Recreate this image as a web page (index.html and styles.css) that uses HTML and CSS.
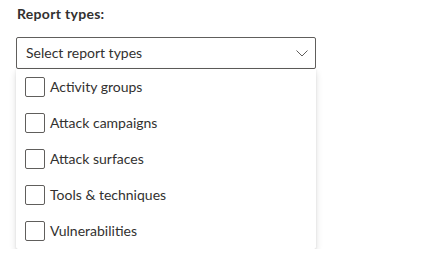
FILE: index.html
```html
<!DOCTYPE html>
<html>
  <head>
  <title>Report types</title>
  <link rel="stylesheet" href="styles.css">
</head>
  <body>
    <div class="field">
      <label class="field-label">Report types:</label>
      <div class="dropdown">
        <span class="dropdown-title">Select report types</span>
        <svg class="caret" width="12" height="7" viewBox="0 0 12 7"><polyline points="0.5,0.5 6,6 11.5,0.5" fill="none" stroke="#605e5c" stroke-width="1"/></svg>
      </div>
      <ul class="options">
        <li><span class="box"></span>Activity groups</li>
        <li><span class="box"></span>Attack campaigns</li>
        <li><span class="box"></span>Attack surfaces</li>
        <li><span class="box"></span>Tools &amp; techniques</li>
        <li><span class="box"></span>Vulnerabilities</li>
      </ul>
    </div>
  </body>
</html>
```

FILE: styles.css
```css
body{
  margin:0;
  background:#fff;
  font-family:Lato, "Noto Sans", sans-serif;
  font-size:14px;
  color:#323130;
}

.field{
  width:300px;
  padding-left:16px;
}

.field-label{
  display:block;
  font-weight:700;
  letter-spacing:0.3px;
  line-height:20px;
  padding:4px 0 13px 1px;
}

.dropdown{
  box-sizing:border-box;
  height:32px;
  border:1px solid #605e5c;
  border-radius:2px;
  display:flex;
  align-items:center;
  justify-content:space-between;
  padding:0 7px 0 9px;
}

.dropdown-title{
  line-height:30px;
}

.caret{
  display:block;
  margin-top:1px;
}

.options{
  list-style:none;
  margin:0;
  padding:0;
  background:#fff;
  border-radius:0 0 2px 2px;
  box-shadow:0 3.2px 7.2px rgba(0,0,0,.132), 0 0.6px 1.8px rgba(0,0,0,.108);
}

.options li{
  height:36px;
  display:flex;
  align-items:center;
  padding-left:9px;
  gap:5px;
  line-height:20px;
}

.box{
  box-sizing:border-box;
  width:20px;
  height:20px;
  border:1px solid #605e5c;
  border-radius:2px;
  flex:none;
}
```
